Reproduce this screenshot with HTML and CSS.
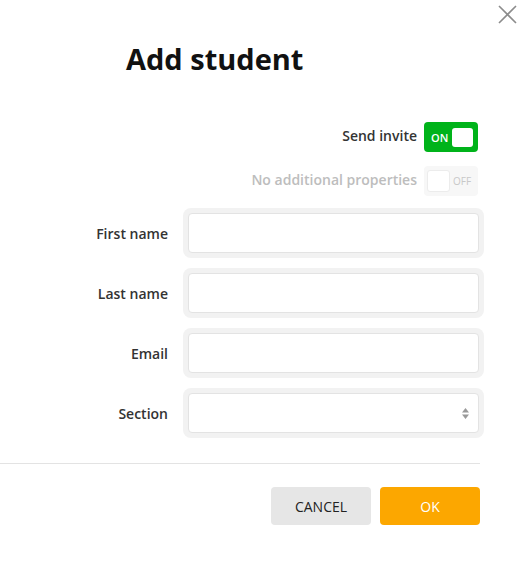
FILE: index.html
```html
<!DOCTYPE html>
<html>
<head>
<meta charset="utf-8">
<link rel="stylesheet" href="styles.css">
</head>
<body>
<div class="modal">
  <button class="close" aria-label="Close">
    <svg width="19" height="19" viewBox="0 0 19 19"><path d="M1 1L18 18M18 1L1 18" stroke="#8c8c8c" stroke-width="1.6" fill="none"/></svg>
  </button>
  <h1 class="title">Add student</h1>
  <div class="toggles">
    <div class="toggle-row">
      <span class="toggle-label">Send invite</span>
      <span class="switch on"><span class="switch-text">ON</span><span class="knob"></span></span>
    </div>
    <div class="toggle-row disabled">
      <span class="toggle-label">No additional properties</span>
      <span class="switch off"><span class="knob"></span><span class="switch-text">OFF</span></span>
    </div>
  </div>
  <form class="form">
    <div class="row"><label class="label">First name</label><div class="field"><input class="input" type="text"></div></div>
    <div class="row"><label class="label">Last name</label><div class="field"><input class="input" type="text"></div></div>
    <div class="row"><label class="label">Email</label><div class="field"><input class="input" type="text"></div></div>
    <div class="row"><label class="label">Section</label><div class="field"><div class="input select">
      <svg class="arrows" width="7" height="11" viewBox="0 0 7 11"><path d="M3.5 0L7 4.5H0Z M0 6.5H7L3.5 11Z" fill="#9a9a9a"/></svg>
    </div></div></div>
  </form>
  <div class="divider"></div>
  <div class="actions">
    <button class="btn cancel" type="button">CANCEL</button>
    <button class="btn ok" type="button">OK</button>
  </div>
</div>
</body>
</html>
```
FILE: styles.css
```css
* { box-sizing: border-box; }
html, body { margin: 0; padding: 0; background: #fff; }
body { font-family: "Open Sans", "Noto Sans", sans-serif; color: #222; }
.modal { position: relative; width: 527px; height: 562px; }
.close {
  position: absolute; top: 5px; left: 498px;
  width: 19px; height: 19px; padding: 0; border: 0; background: none; display: block;
}
.close svg { display: block; }
.title {
  margin: 0; padding: 39px 0 0 126px;
  font-size: 29px; line-height: 40px; font-weight: 700; color: #111;
  letter-spacing: 0;
}
.toggles {
  display: flex; flex-direction: column; gap: 14px;
  width: 478px; margin-top: 43px; align-items: flex-end;
}
.toggle-row { display: flex; align-items: center; gap: 7px; }
.toggle-label { font-size: 14px; font-weight: 600; color: #333; line-height: 20px; position: relative; top: -1px; }
.disabled .toggle-label { color: #bdbdbd; }
.switch {
  width: 54px; height: 30px; border-radius: 4px;
  display: flex; align-items: center; padding: 0 5px 0 3px;
}
.switch.on { background: #00b31a; justify-content: space-between; padding: 0 5px 0 7px; }
.switch.on .switch-text { color: #fff; font-size: 11px; font-weight: 600; }
.switch.on .knob { width: 21px; height: 19px; background: #fff; border-radius: 3px; }
.switch.off { background: #f7f7f7; gap: 3px; }
.switch.off .knob { width: 23px; height: 22px; background: #fff; border: 1px solid #ececec; border-radius: 3px; }
.switch.off .switch-text { color: #c8c8c8; font-size: 10px; }
.form { display: flex; flex-direction: column; gap: 10px; margin-top: 12px; }
.row { display: flex; align-items: center; }
.label {
  width: 168px; text-align: right; padding-right: 0;
  font-size: 14px; font-weight: 600; color: #333;
}
.field {
  margin-left: 15px; width: 301px; height: 50px;
  background: #f2f2f2; border-radius: 8px; padding: 5px;
}
.input {
  display: block; width: 100%; height: 40px; margin: 0;
  background: #fff; border: 1px solid #e3e3e3; border-radius: 4px;
  font: inherit; outline: none;
}
.select { position: relative; }
.arrows { position: absolute; right: 9px; top: 14px; }
.divider { height: 1px; background: #e3e3e3; width: 480px; margin-top: 25px; }
.actions { display: flex; justify-content: flex-end; gap: 9px; width: 480px; margin-top: 23px; }
.btn {
  width: 100px; height: 38px; border: 0; border-radius: 4px;
  font-family: "Open Sans", sans-serif; font-size: 14px; padding: 0;
}
.cancel { background: #e6e6e6; color: #222; }
.ok { background: #fca700; color: #fff; }
```
